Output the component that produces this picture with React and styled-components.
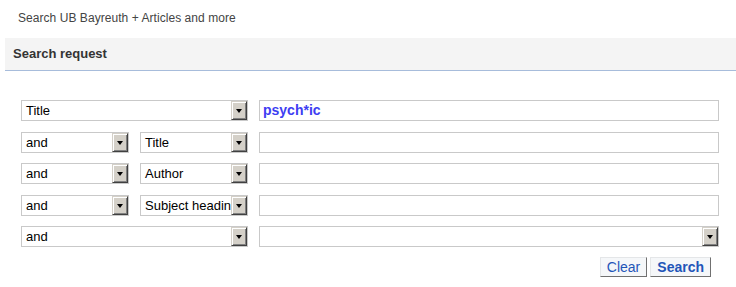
import React from "react";
import styled, { createGlobalStyle } from "styled-components";

const Global = createGlobalStyle`
  html, body { margin: 0; padding: 0; background: #fff; }
  body { font-family: "Liberation Sans", Arial, sans-serif; }
`;

const Page = styled.div`
  width: 736px;
  height: 287px;
  overflow: hidden;
`;

const TopLine = styled.div`
  height: 38px;
  line-height: 37px;
  padding-left: 18px;
  font-size: 12px;
  letter-spacing: 0.05px;
  color: #444;
`;

const Header = styled.div`
  margin-left: 5px;
  height: 32px;
  line-height: 32px;
  background: #f4f4f4;
  border-bottom: 1px solid #a7bcdb;
  padding-left: 8px;
  font-size: 13px;
  font-weight: bold;
  color: #333;
`;

const Form = styled.div`
  padding: 29px 0 0 21px;
  display: flex;
  flex-direction: column;
  gap: 10.5px;
  width: 698px;
`;

const Row = styled.div`
  display: flex;
  gap: 11px;
  height: 21px;
`;

const Left = styled.div`
  display: flex;
  gap: 11px;
  width: 227px;
`;

const SelectBox = styled.div`
  box-sizing: border-box;
  width: ${(p) => p.$w}px;
  height: 21px;
  border: 1px solid #c9c9c9;
  background: #fff;
  display: flex;
  align-items: center;
`;

const SelectLabel = styled.div`
  flex: 1;
  min-width: 0;
  overflow: hidden;
  white-space: nowrap;
  font-size: 13px;
  color: #000;
  padding-left: 4px;
  line-height: 19px;
`;

const ArrowBtn = styled.div`
  box-sizing: border-box;
  width: 16px;
  height: 19px;
  flex: none;
  background: #d4d0c8;
  border: 1px solid;
  border-color: #d4d0c8 #404040 #404040 #d4d0c8;
  box-shadow: inset 1px 1px #fff, inset -1px -1px #808080;
  display: flex;
  align-items: center;
  justify-content: center;
  &::after {
    content: "";
    display: block;
    width: 0;
    height: 0;
    margin-top: 1px;
    border-left: 3.5px solid transparent;
    border-right: 3.5px solid transparent;
    border-top: 4px solid #000;
  }
`;

const TextInput = styled.div`
  box-sizing: border-box;
  width: 460px;
  height: 21px;
  border: 1px solid #c9c9c9;
  background: #fff;
  padding-left: 3px;
  font-size: 14px;
  font-weight: bold;
  color: #3d3df2;
  line-height: 19px;
`;

const Actions = styled.div`
  display: flex;
  justify-content: flex-end;
  gap: 3px;
  padding-right: 8px;
  margin-top: -1px;
`;

const Btn = styled.div`
  box-sizing: border-box;
  height: 20px;
  padding: 0 6px;
  background: #f5f7f9;
  border: 1px solid;
  border-color: #e4e6e8 #707070 #707070 #e4e6e8;
  font-size: 14px;
  line-height: 18px;
  font-weight: ${(p) => (p.$bold ? "bold" : "normal")};
  color: #1f55b8;
`;

function Select({ w, label }) {
  return (
    <SelectBox $w={w}>
      <SelectLabel>{label}</SelectLabel>
      <ArrowBtn />
    </SelectBox>
  );
}

export default function App() {
  return (
    <Page>
      <Global />
      <TopLine>Search UB Bayreuth + Articles and more</TopLine>
      <Header>Search request</Header>
      <Form>
        <Row>
          <Left>
            <Select w={227} label="Title" />
          </Left>
          <TextInput>psych*ic</TextInput>
        </Row>
        <Row>
          <Left>
            <Select w={108} label="and" />
            <Select w={108} label="Title" />
          </Left>
          <TextInput />
        </Row>
        <Row>
          <Left>
            <Select w={108} label="and" />
            <Select w={108} label="Author" />
          </Left>
          <TextInput />
        </Row>
        <Row>
          <Left>
            <Select w={108} label="and" />
            <Select w={108} label="Subject heading" />
          </Left>
          <TextInput />
        </Row>
        <Row>
          <Left>
            <Select w={227} label="and" />
          </Left>
          <Select w={460} label="" />
        </Row>
        <Actions>
          <Btn>Clear</Btn>
          <Btn $bold>Search</Btn>
        </Actions>
      </Form>
    </Page>
  );
}
